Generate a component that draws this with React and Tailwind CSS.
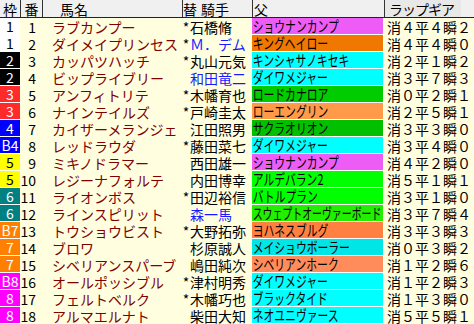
import React from "react";

const waku = {
  1: "bg-white text-black",
  2: "bg-black text-white",
  3: "bg-[#ff2a2a] text-white",
  4: "bg-[#0000ff] text-white",
  5: "bg-[#ffff00] text-black",
  6: "bg-[#008080] text-white",
  7: "bg-[#ff8000] text-white",
  8: "bg-[#ff00ff] text-white",
};

const rows = [
  { w: 1, wl: "1", no: 1, name: "ラブカンプー", mark: true, jockey: "石橋脩", sire: "ショウナンカンプ", sc: "bg-[#ee5cf6]", lap: "消４平４瞬２" },
  { w: 1, wl: "1", no: 2, name: "ダイメイプリンセス", mark: true, blue: true, jockey: "Ｍ．デム", sire: "キングヘイロー", sc: "bg-[#f07800]", lap: "消４平４瞬０" },
  { w: 2, wl: "2", no: 3, name: "カッパツハッチ", mark: true, jockey: "丸山元気", sire: "キンシャサノキセキ", sc: "bg-[#00ffff]", lap: "消２平１瞬２" },
  { w: 2, wl: "2", no: 4, name: "ビップライブリー", blue: true, jockey: "和田竜二", sire: "ダイワメジャー", sc: "bg-[#00ffff]", lap: "消３平７瞬３" },
  { w: 3, wl: "3", no: 5, name: "アンフィトリテ", mark: true, jockey: "木幡育也", sire: "ロードカナロア", sc: "bg-[#00cc00]", lap: "消０平２瞬１" },
  { w: 3, wl: "3", no: 6, name: "ナインテイルズ", mark: true, jockey: "戸崎圭太", sire: "ローエングリン", sc: "bg-[#ff9a4a]", lap: "消２平５瞬１" },
  { w: 4, wl: "4", no: 7, name: "カイザーメランジェ", jockey: "江田照男", sire: "サクラオリオン", sc: "bg-[#00c000]", lap: "消３平３瞬０" },
  { w: 4, wl: "B4", no: 8, name: "レッドラウダ", mark: true, jockey: "藤田菜七", sire: "ダイワメジャー", sc: "bg-[#00ffff]", lap: "消３平４瞬０" },
  { w: 5, wl: "5", no: 9, name: "ミキノドラマー", jockey: "西田雄一", sire: "ショウナンカンプ", sc: "bg-[#ee5cf6]", lap: "消４平２瞬０" },
  { w: 5, wl: "5", no: 10, name: "レジーナフォルテ", jockey: "内田博幸", sire: "アルデバラン2", sc: "bg-[#00ff00]", lap: "消５平１瞬１" },
  { w: 6, wl: "6", no: 11, name: "ライオンボス", mark: true, jockey: "田辺裕信", sire: "バトルプラン", sc: "bg-[#00ff00]", lap: "消３平１瞬０" },
  { w: 6, wl: "6", no: 12, name: "ラインスピリット", blue: true, jockey: "森一馬", sire: "スウェプトオーヴァーボード", sc: "bg-[#22ee00]", long: true, lap: "消３平７瞬４" },
  { w: 7, wl: "B7", no: 13, name: "トウショウビスト", mark: true, jockey: "大野拓弥", sire: "ヨハネスブルグ", sc: "bg-[#ff8040]", lap: "消３平３瞬３" },
  { w: 7, wl: "7", no: 14, name: "ブロワ", jockey: "杉原誠人", sire: "メイショウボーラー", sc: "bg-[#00e6e6]", lap: "消０平３瞬２" },
  { w: 7, wl: "7", no: 15, name: "シベリアンスパーブ", jockey: "嶋田純次", sire: "シベリアンホーク", sc: "bg-[#ff8c5a]", lap: "消１平２瞬６" },
  { w: 8, wl: "B8", no: 16, name: "オールポッシブル", mark: true, jockey: "津村明秀", sire: "ダイワメジャー", sc: "bg-[#00ffff]", lap: "消１平２瞬３" },
  { w: 8, wl: "8", no: 17, name: "フェルトベルク", mark: true, jockey: "木幡巧也", sire: "ブラックタイド", sc: "bg-[#00ffff]", lap: "消１平３瞬０" },
  { w: 8, wl: "8", no: 18, name: "アルマエルナト", jockey: "柴田大知", sire: "ネオユニヴァース", sc: "bg-[#00ffff]", lap: "消５平５瞬１" },
];

export default function App() {
  return (
    <div
      className="w-[474px] h-[324px] bg-white overflow-hidden text-[14px] leading-[16px]"
      style={{ fontFamily: '"Noto Sans CJK JP", "Noto Sans", sans-serif' }}
    >
      {/* header */}
      <div className="flex h-[18px] bg-[#f0f0f0] border-b border-[#222] text-black">
        <div className="w-[20px] flex items-center justify-center">枠</div>
        <div className="w-[22px] border-l border-[#333] flex items-center justify-center">番</div>
        <div className="w-[140px] border-l border-[#333] flex items-center pl-[17px]">馬名</div>
        <div className="w-[70px] border-l border-[#333] flex items-center gap-[4px]">
          <span>替</span>
          <span>騎手</span>
        </div>
        <div className="w-[132px] border-l border-[#333] flex items-center pl-[1px]">父</div>
        <div className="flex-1 border-l border-[#333] flex items-center">
          <span className="bg-[#e8e8e8] h-full w-[76px] flex items-center pl-[4px] tracking-[-1px]">ラップギア</span>
        </div>
      </div>

      {rows.map((r) => (
        <div key={r.no} className="flex h-[17px]">
          <div className={`w-[20px] border-b border-white flex items-center justify-center ${waku[r.w]}`}>
            {r.wl}
          </div>
          <div className="w-[22px] bg-[#ffffe0] text-black pr-[6px] flex items-center justify-end">
            {r.no}
          </div>
          <div className="w-[140px] bg-[#ffffe0] text-[#800000] pl-[10px] flex items-center whitespace-nowrap overflow-hidden">
            {r.name}
          </div>
          <div
            className={`w-[70px] bg-[#ffffe0] flex items-center whitespace-nowrap overflow-hidden ${
              r.blue ? "text-[#1a1aff]" : "text-black"
            }`}
          >
            <span className="w-[8px] text-black text-center">{r.mark ? "*" : ""}</span>
            <span>{r.jockey}</span>
          </div>
          <div className={`w-[132px] border-b border-r border-white overflow-hidden flex items-center ${r.sc}`}>
            <span
              className={`inline-block whitespace-nowrap origin-left pl-[1px] text-black text-[15px] leading-[16px] ${
                r.long ? "scale-x-[0.66]" : "scale-x-[0.72]"
              }`}
            >
              {r.sire}
            </span>
          </div>
          <div className="flex-1 bg-[#ffffe0] text-black pl-[3px] flex items-center whitespace-nowrap">
            {r.lap}
          </div>
        </div>
      ))}
    </div>
  );
}
